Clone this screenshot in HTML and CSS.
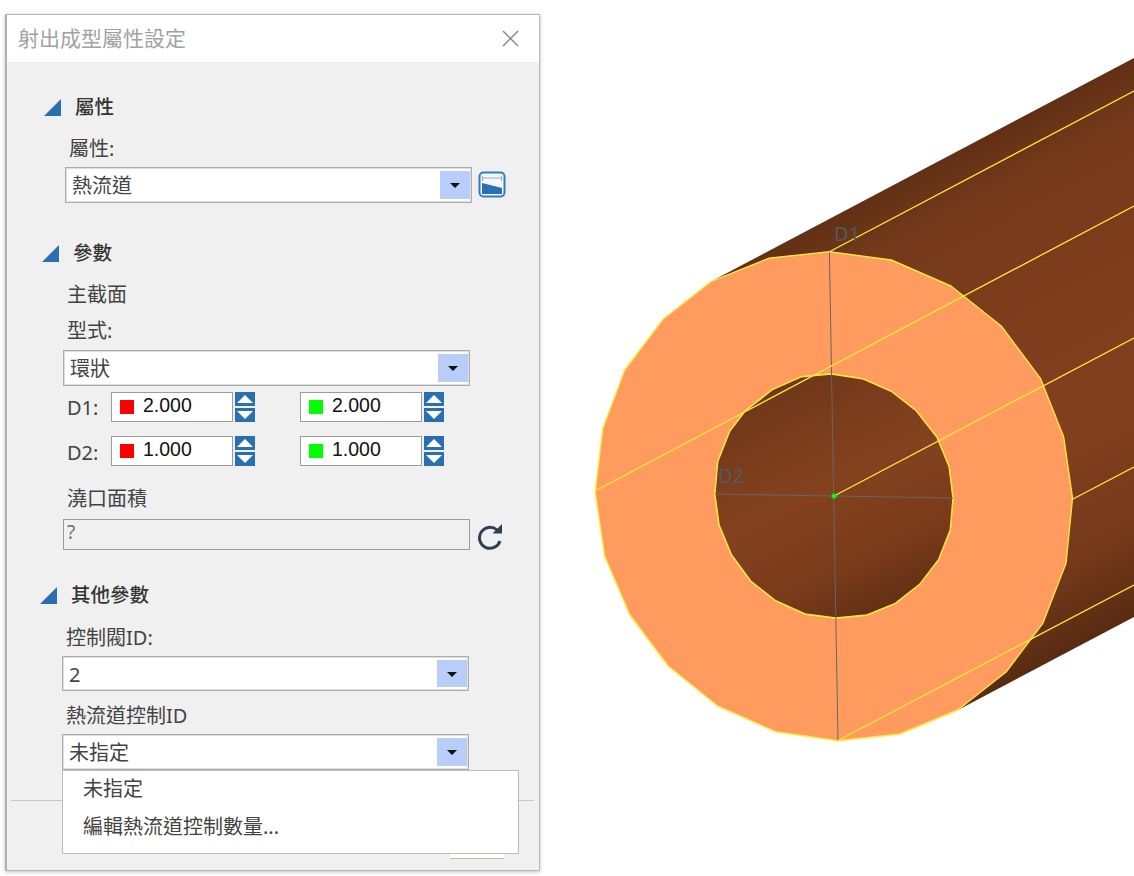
FILE: index.html
```html
<!DOCTYPE html>
<html lang="zh-Hant">
<head>
    <meta charset="UTF-8">
    <title>射出成型屬性設定</title>
    <link rel="stylesheet" href="styles.css">
</head>
<body>
    <div class="page">
        <!-- dialog -->
        <div class="dialog">
            <div class="dialog-header">
                <span class="dialog-title">射出成型屬性設定</span>
                <svg class="close-icon" width="17" height="17" viewBox="0 0 17 17"><path d="M1 1L16 16M16 1L1 16"/></svg>
            </div>

            <div class="section section-attr">
                <div class="section-heading"><span class="triangle"></span><span>屬性</span></div>
                <div class="section-body">
                    <div class="field-label first">屬性:</div>
                    <div class="combo-row">
                        <div class="combo"><span class="combo-text">熱流道</span><span class="combo-btn"></span></div>
                        <svg class="attr-icon" width="28" height="27" viewBox="0 0 28 27">
                            <rect x="1.5" y="1.5" width="25" height="24" rx="4" fill="#f4f7fb" stroke="#2f7cc2" stroke-width="2"/>
                            <path d="M4.500 5V10M23.500 5V10M4.500 7H23.500" fill="none" stroke="#a9a9a9"/>
                            <polygon points="4,12 24,17 24,23 4,23" fill="#2a6fb2"/>
                        </svg>
                    </div>
                </div>
            </div>

            <div class="section section-params">
                <div class="section-heading"><span class="triangle"></span><span>參數</span></div>
                <div class="section-body">
                    <div class="field-label first">主截面</div>
                    <div class="field-label second">型式:</div>
                    <div class="combo"><span class="combo-text">環狀</span><span class="combo-btn"></span></div>

                    <div class="dim-row dim-row-1">
                        <span class="dim-label">D1:</span>
                        <div class="num-input"><span class="swatch red"></span><span>2.000</span></div>
                        <div class="spin"><span class="spin-up"></span><span class="spin-down"></span></div>
                        <div class="num-input second-col"><span class="swatch green"></span><span>2.000</span></div>
                        <div class="spin"><span class="spin-up"></span><span class="spin-down"></span></div>
                    </div>
                    <div class="dim-row dim-row-2">
                        <span class="dim-label low">D2:</span>
                        <div class="num-input"><span class="swatch red"></span><span>1.000</span></div>
                        <div class="spin"><span class="spin-up"></span><span class="spin-down"></span></div>
                        <div class="num-input second-col"><span class="swatch green"></span><span>1.000</span></div>
                        <div class="spin"><span class="spin-up"></span><span class="spin-down"></span></div>
                    </div>

                    <div class="field-label gate-label">澆口面積</div>
                    <div class="combo-row">
                        <div class="readonly-input">?</div>
                        <svg class="reload-icon" width="27" height="27" viewBox="0 0 27 27">
                            <path d="M20 7A10.500 10.500 0 1 0 23 18" fill="none" stroke="#2e4053" stroke-width="3"/>
                            <polygon points="15.500,10.500 25,10.500 25,1" fill="#2e4053"/>
                        </svg>
                    </div>
                </div>
            </div>

            <div class="section section-other">
                <div class="section-heading"><span class="triangle"></span><span>其他參數</span></div>
                <div class="section-body">
                    <div class="field-label valve-label">控制閥ID:</div>
                    <div class="combo combo-short"><span class="combo-text">2</span><span class="combo-btn"></span></div>
                    <div class="field-label hot-label">熱流道控制ID</div>
                    <div class="combo">
                        <span class="combo-text">未指定</span><span class="combo-btn"></span>
                        <div class="combo-menu">
                            <div class="menu-item">未指定</div>
                            <div class="menu-item">編輯熱流道控制數量...</div>
                        </div>
                    </div>
                </div>
            </div>

            <div class="dialog-footer">
                <span class="footer-btn"></span>
            </div>
        </div>

        <!-- 3D view -->
        <svg class="viewport" width="594" height="876" viewBox="540 0 594 876">
            <defs>
                <linearGradient id="tubeShade" gradientUnits="userSpaceOnUse" x1="835" y1="216" x2="1066" y2="653">
                    <stop offset="0" stop-color="#613015"/>
                    <stop offset="0.1" stop-color="#74391a"/>
                    <stop offset="0.35" stop-color="#7e3d1d"/>
                    <stop offset="0.6" stop-color="#83401e"/>
                    <stop offset="0.85" stop-color="#75391a"/>
                    <stop offset="1" stop-color="#582b12"/>
                </linearGradient>
                <linearGradient id="holeShade" gradientUnits="userSpaceOnUse" x1="775" y1="365" x2="900" y2="620">
                    <stop offset="0" stop-color="#6c3518"/>
                    <stop offset="0.45" stop-color="#84421f"/>
                    <stop offset="0.75" stop-color="#7a3b1b"/>
                    <stop offset="1" stop-color="#5c2d13"/>
                </linearGradient>
            </defs>

            <polygon points="710,282 1134,58 1134,617 958,710" fill="url(#tubeShade)"/>

            <path class="face" fill-rule="evenodd" d="M829.400 251.700L891.200 260L950.900 286L1001.200 326L1040.400 378.300L1063.600 436.700L1072.500 498L1066 563.300L1042.800 623.300L1006.400 671.700L957.800 710L899.900 734L838.100 740.700L775.600 731.700L717.700 706L668.100 666L629.900 615L604.600 556L595.200 491.700L602.800 428.300L624.700 370L662.900 319.300L710.800 281.700L768.700 258.300Z
                M831.200 374L862.400 378.700L891.200 391.300L916.200 410.700L937 437.300L949.100 466.700L953 498.300L950.200 530L938.700 559.300L919.600 584.300L895.300 603.300L866.900 615L835.700 618L805.100 614L775.600 600.700L750.700 581L731.600 555L719.100 525L714.900 494L717.700 461.700L729.500 431.700L745.500 410.700L772.900 389.300L801.700 376.700Z"/>
            <polygon class="hole" points="831.200,374 862.400,378.700 891.200,391.300 916.200,410.700 937,437.300 949.100,466.700 953,498.300 950.200,530 938.700,559.300 919.600,584.300 895.300,603.300 866.900,615 835.700,618 805.100,614 775.600,600.700 750.700,581 731.600,555 719.100,525 714.900,494 717.700,461.700 729.500,431.700 745.500,410.700 772.900,389.300 801.700,376.700" fill="url(#holeShade)"/>

            <path class="dim-line" d="M829.400 252L838 740.500M715 494L953 498"/>
            <path class="edge" d="M595 491L1134 206M829.400 251.700L1134 91M834 496L1134 338M1073 499L1134 467M838 740.500L1134 585"/>

            <text class="dim-text" x="834" y="241">D1</text>
            <text class="dim-text" x="718" y="483">D2</text>
            <circle cx="834" cy="496" r="2.500" fill="#00ff00"/>
        </svg>
    </div>
</body>
</html>
```

FILE: styles.css
```css
html, body {
    margin: 0;
    padding: 0;
    background: white;
    overflow: hidden;
}

body {
    font-family: "Noto Sans", "Noto Sans CJK TC", sans-serif;
    color: #444;
}

.page {
    display: flex;
    align-items: flex-start;
    width: 1134px;
    height: 876px;
}

.dialog {
    flex: none;
    box-sizing: border-box;
    display: flex;
    flex-direction: column;
    width: 535px;
    height: 857px;
    margin: 14px 0 0 5px;
    background: #f0f0f0;
    border: 1px solid #b8b8b8;
    border-left: 2px solid #b0b0b0;
    box-shadow: 0 1px 4px rgba(0,0,0,0.25);
}

.dialog-header {
    display: flex;
    align-items: center;
    justify-content: space-between;
    height: 47px;
    padding: 0 20px 0 11px;
    background: white;
}

.dialog-title {
    margin-bottom: 3px;
    font-size: 21px;
    color: #a2a2a2;
}

.close-icon path {
    fill: none;
    stroke: #8a8a8a;
    stroke-width: 1.5;
}

.viewport {
    flex: none;
    display: block;
}

/* sections */
.section-attr {
    margin-top: 33px;
    padding-left: 37px;
}

.section-params {
    margin-top: 38px;
    padding-left: 35px;
}

.section-other {
    margin-top: 33px;
    padding-left: 33px;
}

.section-heading {
    display: flex;
    align-items: flex-start;
    gap: 14px;
    height: 24px;
    line-height: 23px;
    font-size: 19.500px;
    font-weight: 500;
    color: #333;
}

.triangle {
    width: 0;
    height: 0;
    margin-top: 4px;
    border-bottom: 17px solid #2a6fb2;
    border-left: 17px solid transparent;
}

.section-body {
    margin-left: 21px;
}

.section-other .section-body {
    margin-left: 22px;
}

.field-label {
    height: 24px;
    line-height: 26px;
    padding-left: 4px;
    font-size: 20px;
}

.field-label.first {
    margin: 17px 0 7px;
}

.section-params .field-label.first {
    margin-bottom: 0;
}

.field-label.second {
    margin: 12px 0 8px;
}

.gate-label {
    margin: 20px 0 9px;
}

.valve-label {
    margin: 18px 0 7px;
}

.hot-label {
    margin: 12px 0 7px;
}

/* combo box */
.combo-row {
    display: flex;
    align-items: center;
    gap: 6px;
}

.combo {
    position: relative;
    box-sizing: border-box;
    display: flex;
    justify-content: space-between;
    width: 407px;
    height: 36px;
    padding: 3px 1px 3px 6px;
    background: white;
    border: 1px solid #adadad;
    box-shadow: 0 0 0 1px #dedede inset;
}

.combo-short {
    height: 35px;
}

.combo-text {
    line-height: 29px;
    font-size: 20px;
}

.combo-btn {
    position: relative;
    width: 30px;
    background: #b9cdfb;
}

.combo-btn::after {
    content: "";
    position: absolute;
    top: 12px;
    left: 10px;
    border-top: 5px solid #111;
    border-left: 5px solid transparent;
    border-right: 5px solid transparent;
}

.combo-menu {
    position: absolute;
    top: calc(100% + 1px);
    left: -1px;
    z-index: 5;
    box-sizing: border-box;
    width: 457px;
    height: 84px;
    background: white;
    border: 1px solid #bdbdbd;
}

.menu-item {
    height: 38px;
    line-height: 36px;
    padding-left: 20px;
    font-size: 20px;
}

.attr-icon {
    margin-top: -2px;
}

/* dimension rows */
.dim-row {
    display: flex;
    align-items: flex-start;
    height: 30px;
}

.dim-row-1 {
    margin-top: 6px;
}

.dim-row-2 {
    margin-top: 14px;
}

.dim-label {
    width: 48px;
    padding-left: 4px;
    box-sizing: border-box;
    line-height: 32px;
    font-size: 20px;
}

.dim-label.low {
    line-height: 34px;
}

.num-input {
    box-sizing: border-box;
    display: flex;
    align-items: center;
    gap: 9px;
    width: 122px;
    height: 30px;
    padding: 0 0 3px 8px;
    background: white;
    border: 1px solid #9c9c9c;
    font-family: "Liberation Sans", sans-serif;
    font-size: 19.500px;
    color: #111;
}

.num-input.second-col {
    margin-left: 45px;
}

.swatch {
    width: 14px;
    height: 14px;
    margin-top: 3px;
}

.red {
    background: #ff0000;
}

.green {
    background: #00ff00;
}

.spin {
    display: flex;
    flex-direction: column;
    gap: 2px;
    margin-left: 2px;
}

.spin span {
    position: relative;
    display: block;
    width: 20px;
    height: 14px;
    background: #2a6fb2;
}

.spin-up::after,
.spin-down::after {
    content: "";
    position: absolute;
    left: 2px;
    border-left: 8px solid transparent;
    border-right: 8px solid transparent;
}

.spin-up::after {
    top: 3px;
    border-bottom: 8px solid white;
}

.spin-down::after {
    top: 3px;
    border-top: 8px solid white;
}

/* gate area */
.readonly-input {
    box-sizing: border-box;
    width: 407px;
    height: 31px;
    padding-left: 3px;
    line-height: 24px;
    background: #f0f0f0;
    border: 1px solid #9a9a9a;
    font-size: 19px;
    color: #6e6e6e;
}

.reload-icon {
    margin: 3px 0 0 1px;
}

/* footer */
.dialog-footer {
    display: flex;
    justify-content: flex-end;
    margin: auto 5px 0 4px;
    height: 69px;
    padding-right: 30px;
    border-top: 1px solid #c8c8c8;
}

.footer-btn {
    align-self: flex-end;
    box-sizing: border-box;
    width: 54px;
    height: 34px;
    margin-bottom: 11px;
    background: white;
    border-bottom: 1px solid #c9b79c;
}

/* 3D view */
.face {
    fill: #ff9b5e;
    stroke: #ffe93b;
    stroke-width: 1.4;
    stroke-linejoin: round;
}

.hole {
    stroke: #ffe93b;
    stroke-width: 1.4;
}

.edge {
    fill: none;
    stroke: #ffe93b;
    stroke-width: 1.3;
}

.dim-line {
    fill: none;
    stroke: #666;
    stroke-width: 1;
}

.dim-text {
    font-family: "Noto Sans", sans-serif;
    font-size: 20px;
    fill: #505a60;
}
```
